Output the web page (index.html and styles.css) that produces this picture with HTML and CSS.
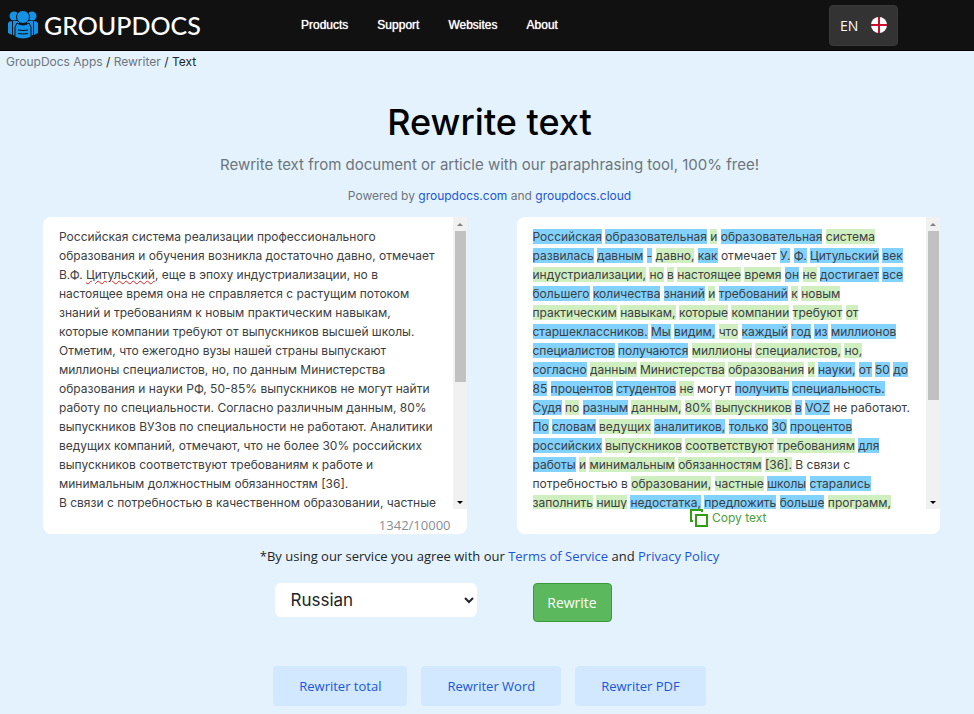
FILE: index.html
```html
<!DOCTYPE html>
<html lang="en">
<head>
    <meta charset="UTF-8">
    <meta name="viewport" content="width=device-width, initial-scale=1.0">
    <title>Rewrite text</title>
    <link rel="stylesheet" href="styles.css">
</head>
<body>
    <header class="topbar">
        <a class="logo" href="#">
            <svg width="32" height="30" viewBox="0 0 32 30" fill="#1492e6" aria-hidden="true">
                <circle cx="7" cy="6" r="4.500"/>
                <circle cx="25" cy="6" r="4.500"/>
                <path d="M1 13q1-2 4-2v14l-4-2z"/>
                <path d="M31 13q-1-2-4-2v14l4-2z"/>
                <path d="M6 11h6v15q-4 0-6-1z"/>
                <path d="M26 11h-6v15q4 0 6-1z"/>
                <g stroke="#111" stroke-width="1">
                    <circle cx="16" cy="7" r="6.500"/>
                    <path d="M10 13q6 4 12 0l2 4v10q-8 4-16 0V17z"/>
                </g>
                <path d="M5.500 12v13M26.500 12v13M11 20q5 1 10 0M11 23.500q5 1 10 0" stroke="#111" stroke-width="1" fill="none"/>
            </svg>
            <span>GROUPDOCS</span>
        </a>
        <nav class="menu">
            <a href="#">Products</a>
            <a href="#">Support</a>
            <a href="#">Websites</a>
            <a href="#">About</a>
        </nav>
        <button type="button" class="lang">
            EN
            <svg width="16" height="16" viewBox="0 0 16 16" aria-hidden="true">
                <circle cx="8" cy="8" r="8" fill="#fff"/>
                <path d="M8 0v16M0 8h16" stroke="#c8102e" stroke-width="2"/>
            </svg>
        </button>
    </header>

    <nav class="breadcrumb">
        <a href="#">GroupDocs Apps</a> / <a href="#">Rewriter</a> / <span>Text</span>
    </nav>

    <main>
        <h1>Rewrite text</h1>
        <p class="subtitle">Rewrite text from document or article with our paraphrasing tool, 100% free!</p>
        <p class="powered">Powered by <a href="#">groupdocs.com</a> and <a href="#">groupdocs.cloud</a></p>

        <div class="editors">
            <section class="card">
                <div class="pane">
                    <div class="field">
                        <div class="spelling" aria-hidden="true">Российская система реализации профессионального образования и обучения возникла достаточно давно, отмечает В.Ф. <span>Цитульский</span></div>
                        <textarea id="source" aria-label="Source text" spellcheck="false">Российская система реализации профессионального образования и обучения возникла достаточно давно, отмечает В.Ф. Цитульский, еще в эпоху индустриализации, но в настоящее время она не справляется с растущим потоком знаний и требованиям к новым практическим навыкам, которые компании требуют от выпускников высшей школы. Отметим, что ежегодно вузы нашей страны выпускают миллионы специалистов, но, по данным Министерства образования и науки РФ, 50-85% выпускников не могут найти работу по специальности. Согласно различным данным, 80% выпускников ВУЗов по специальности не работают. Аналитики ведущих компаний, отмечают, что не более 30% российских выпускников соответствуют требованиям к работе и минимальным должностным обязанностям [36].
В связи с потребностью в качественном образовании, частные</textarea>
                    </div>
                    <div class="scrollbar" aria-hidden="true"><i class="up"></i><b class="thumb thumb-source"></b><i class="down"></i></div>
                </div>
                <div class="count">1342/10000</div>
            </section>

            <section class="card">
                <div class="pane">
                    <div class="output">
                        <mark class="new">Российская</mark> <mark class="new">образовательная</mark> <mark>и</mark> <mark class="new">образовательная</mark> <mark>система</mark>
                        <mark class="new">развилась</mark> <mark class="new">давным</mark> <mark class="new">-</mark> <mark>давно,</mark> <mark class="new">как</mark> отмечает <mark class="new">У.</mark> <mark class="new">Ф.</mark> <mark class="new">Цитульский</mark> <mark class="new">век</mark>
                        <mark>индустриализации,</mark> <mark>но</mark> <mark>в</mark> <mark>настоящее</mark> <mark>время</mark> <mark class="new">он</mark> <mark>не</mark> <mark class="new">достигает</mark> <mark class="new">все</mark>
                        <mark class="new">большего</mark> <mark class="new">количества</mark> <mark class="new">знаний</mark> <mark>и</mark> <mark class="new">требований</mark> <mark>к</mark> <mark>новым</mark>
                        <mark>практическим</mark> <mark>навыкам,</mark> <mark>которые</mark> <mark>компании</mark> <mark>требуют</mark> <mark>от</mark>
                        <mark class="new">старшеклассников.</mark> <mark class="new">Мы</mark> <mark class="new">видим,</mark> <mark>что</mark> <mark class="new">каждый</mark> <mark class="new">год</mark> <mark class="new">из</mark> <mark class="new">миллионов</mark>
                        <mark class="new">специалистов</mark> <mark class="new">получаются</mark> <mark>миллионы</mark> <mark>специалистов,</mark> <mark>но,</mark>
                        <mark class="new">согласно</mark> <mark>данным</mark> <mark>Министерства</mark> <mark>образования</mark> <mark>и</mark> <mark class="new">науки,</mark> <mark class="new">от</mark> <mark class="new">50</mark> <mark class="new">до</mark>
                        <mark class="new">85</mark> <mark class="new">процентов</mark> <mark class="new">студентов</mark> <mark>не</mark> могут <mark class="new">получить</mark> <mark class="new">специальность.</mark>
                        <mark class="new">Судя</mark> <mark>по</mark> <mark class="new">разным</mark> <mark>данным,</mark> <mark>80%</mark> <mark>выпускников</mark> <mark class="new">в</mark> <mark class="new">VOZ</mark> не работают.
                        <mark class="new">По</mark> <mark class="new">словам</mark> <mark>ведущих</mark> <mark class="new">аналитиков,</mark> <mark class="new">только</mark> <mark class="new">30</mark> <mark class="new">процентов</mark>
                        <mark class="new">российских</mark> <mark>выпускников</mark> <mark>соответствуют</mark> <mark>требованиям</mark> <mark class="new">для</mark>
                        <mark class="new">работы</mark> <mark>и</mark> <mark>минимальным</mark> <mark>обязанностям</mark> <mark>[36].</mark> В связи с
                        потребностью в <mark>образовании,</mark> <mark>частные</mark> <mark class="new">школы</mark> <mark class="new">старались</mark>
                        <mark>заполнить</mark> <mark>нишу</mark> <mark class="new">недостатка,</mark> <mark class="new">предложить</mark> <mark class="new">больше</mark> <mark>программ,</mark>
                    </div>
                    <div class="scrollbar" aria-hidden="true"><i class="up"></i><b class="thumb thumb-output"></b><i class="down"></i></div>
                </div>
                <button type="button" class="copy">
                    <svg width="18" height="18" viewBox="0 0 18 18" fill="none" stroke="#2f9e0f" stroke-width="2" aria-hidden="true">
                        <path d="M3 12H1V1h11v2M6 6h11v11H6z"/>
                    </svg>
                    Copy text
                </button>
            </section>
        </div>

        <p class="terms">*By using our service you agree with our <a href="#">Terms of Service</a> and <a href="#">Privacy Policy</a></p>

        <form class="controls">
            <select aria-label="Language">
                <option>Russian</option>
                <option>English</option>
            </select>
            <button type="button" class="rewrite">Rewrite</button>
        </form>

        <div class="apps">
            <a href="#">Rewriter total</a>
            <a href="#">Rewriter Word</a>
            <a href="#">Rewriter PDF</a>
        </div>
    </main>
</body>
</html>
```
FILE: styles.css
```css
* {
    box-sizing: border-box;
}

body {
    margin: 0;
    background: #e4f2fe;
    color: #212529;
    font-family: Inter, sans-serif;
    font-size: 12px;
}

a {
    color: #1a56db;
    text-decoration: none;
}

h1, p {
    margin: 0;
}

.topbar {
    display: flex;
    align-items: center;
    height: 51px;
    padding: 0 76px 0 7px;
    background: #111;
    border-bottom: 1px solid #000;
}

.logo {
    display: flex;
    align-items: center;
    gap: 5px;
    width: 294px;
    color: #fff;
    font: 500 25px/30px Lato, sans-serif;
}

.menu {
    display: flex;
    flex: 1;
    gap: 29px;
}

.menu a {
    color: #fff;
    font: 12px/20px "Liberation Sans", Arial, sans-serif;
    text-shadow: 0 0 1px #fff;
}

.lang {
    display: flex;
    align-items: center;
    justify-content: space-between;
    width: 69px;
    height: 41px;
    padding: 0 10px;
    border: 1px solid #3a3a3a;
    border-radius: 4px;
    background: #333;
    color: #fff;
    font: 14px "Open Sans", sans-serif;
}

.breadcrumb {
    padding: 2px 6px 0;
    line-height: 18px;
}

.breadcrumb a {
    color: #6c757d;
}

main {
    padding-left: 5px;
    text-align: center;
}

h1 {
    margin-top: 28px;
    color: #000;
    font-size: 36px;
    font-weight: 500;
    line-height: 46px;
}

.subtitle {
    margin-top: 10px;
    color: #6c757d;
    font-size: 15px;
    line-height: 20px;
}

.powered {
    margin-top: 12px;
    color: #6c757d;
    line-height: 18px;
}

.editors {
    display: grid;
    grid-template-columns: 1fr 1fr;
    gap: 50px;
    margin: 12px 34px 0 38px;
    text-align: left;
}

.card {
    height: 317px;
    border-radius: 8px;
    background: #fff;
}

.pane {
    display: flex;
    height: 292px;
}

.field {
    position: relative;
    flex: 1;
}

.spelling,
.field textarea,
.output {
    width: 100%;
    height: 100%;
    padding: 10px 16px 0;
    font: 12px/19px Inter, sans-serif;
}

/* sits behind the textarea, only its wavy underline shows */
.spelling {
    position: absolute;
    top: 0;
    left: 0;
    color: transparent;
}

.spelling span {
    text-decoration: underline wavy #e02020 1px;
}

.field textarea {
    position: relative;
    display: block;
    border: 0;
    outline: 0;
    background: transparent;
    color: #3c4043;
    resize: none;
    scrollbar-width: none;
}

.output {
    flex: 1;
    overflow: hidden;
    color: #3c4043;
}

mark {
    background: #d0efc0;
    color: inherit;
}

mark.new {
    background: #82d2ff;
}

.scrollbar {
    display: flex;
    flex-direction: column;
    width: 14px;
    background: #f1f1f1;
}

.scrollbar i {
    height: 14px;
}

.scrollbar i::before {
    content: "";
    display: block;
    width: 0;
    margin: 6px auto 0;
    border: 3px solid transparent;
}

.scrollbar .up::before {
    border-top: 0;
    border-bottom-color: #808080;
}

.scrollbar .down {
    margin-top: auto;
}

.scrollbar .down::before {
    border-bottom: 0;
    border-top-color: #000;
}

.thumb {
    margin: 0 1px 0 2px;
    background: #c1c1c1;
}

.thumb-source {
    height: 151px;
}

.thumb-output {
    height: 169px;
}

.count {
    padding: 6px 16px 0;
    color: #868e96;
    font: 13px/20px "Open Sans", sans-serif;
    text-align: right;
}

.copy {
    display: flex;
    align-items: center;
    gap: 4px;
    margin: 0 auto;
    padding: 0;
    border: 0;
    background: none;
    color: #4aa03a;
    font: 12px/16px Inter, sans-serif;
}

.terms {
    margin-top: 12px;
    font: 13px/20px "Open Sans", sans-serif;
}

.controls {
    display: flex;
    justify-content: center;
    gap: 56px;
    margin-top: 17px;
    padding-right: 93px;
}

.controls select {
    width: 202px;
    height: 34px;
    padding: 0 0 0 12px;
    border: 0;
    border-radius: 6px;
    background: #fff;
    color: #212529;
    font: 17px Inter, sans-serif;
}

.rewrite {
    width: 79px;
    height: 39px;
    padding: 0;
    border: 1px solid #3c9a3c;
    border-radius: 4px;
    background: #5cb85c;
    color: #fff;
    font: 14px "Open Sans", sans-serif;
}

.apps {
    display: flex;
    justify-content: center;
    gap: 14px;
    margin-top: 44px;
}

.apps a {
    padding: 10px 26px;
    border-radius: 4px;
    background: #d2e8fe;
    font: 13px/20px "Open Sans", sans-serif;
}
```
